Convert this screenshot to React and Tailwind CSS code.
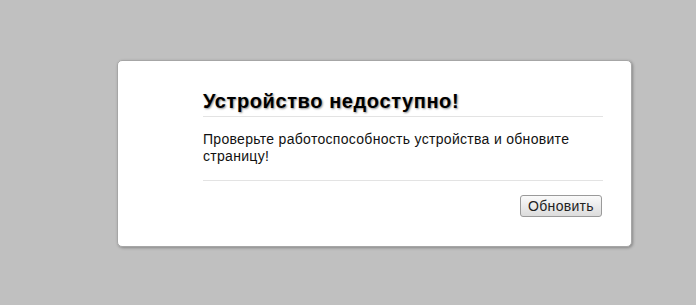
import React from 'react';

const App = () => {
    return (
        <div className="w-full h-[305px] bg-[#c0c0c0] pt-[60px] pl-[117px] font-['Liberation_Sans',Arial,sans-serif] overflow-hidden">
            <div className="w-[515px] h-[187px] bg-white border border-[#a6a6a6] rounded-[5px] shadow-[1px_1px_3px_rgba(0,0,0,0.3)] pl-[85px] pr-[28px] pt-[28px]">
                {/* Заголовок */}
                <h2 className="text-[20px] leading-[24px] font-bold text-black tracking-[0.6px] pb-[3px] border-b border-[#e3e3e3] [text-shadow:1px_1px_2px_rgba(0,0,0,0.45)]">
                    Устройство недоступно!
                </h2>
                <p className="mt-[14px] text-[14px] leading-[17px] tracking-[0.3px] text-[#111] pb-[15px] border-b border-[#e3e3e3] pr-[20px]">
                    Проверьте работоспособность устройства и обновите страницу!
                </p>
                <div className="flex justify-end mt-[14px] pr-[1px]">
                    <button className="h-[22px] w-[82px] text-[14px] leading-[20px] tracking-[0.3px] text-[#222] border border-[#9a9a9a] rounded-[3px] bg-gradient-to-b from-[#fafafa] to-[#dcdcdc]">
                        Обновить
                    </button>
                </div>
            </div>
        </div>
    );
};

export default App;
